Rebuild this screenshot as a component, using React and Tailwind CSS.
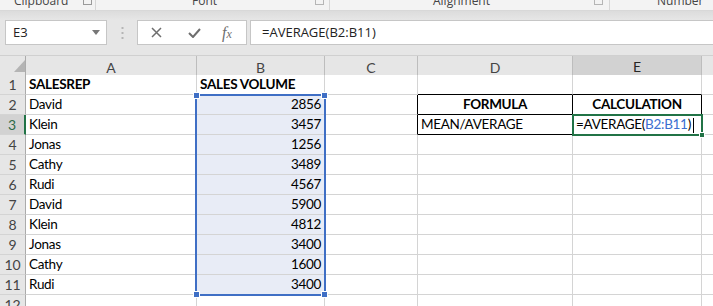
import React from 'react';

const cols = ['A', 'B', 'C', 'D', 'E'];
const data = [
    ['SALESREP', 'SALES VOLUME'],
    ['David', '2856'],
    ['Klein', '3457'],
    ['Jonas', '1256'],
    ['Cathy', '3489'],
    ['Rudi', '4567'],
    ['David', '5900'],
    ['Klein', '4812'],
    ['Jonas', '3400'],
    ['Cathy', '1600'],
    ['Rudi', '3400'],
    ['', ''],
];

const gridCols = 'grid grid-cols-[26px_171px_128px_93px_155px_129px_1fr]';

function Cell({ children, className = '' }) {
    return (
        <div className={`h-[20px] border-r border-b border-[#d4d4d4] px-[3px] leading-[19px] whitespace-nowrap overflow-visible ${className}`}>
            {children}
        </div>
    );
}

export default function App() {
    return (
        <div className="w-[713px] h-[306px] overflow-hidden bg-[#e6e6e6] text-[#000]" style={{ fontFamily: 'Lato, sans-serif' }}>
            {/* ribbon group labels, cut off at the top */}
            <div className="h-[10px] bg-[#f3f3f3] overflow-hidden flex text-[12px] text-[#444]" style={{ fontFamily: '"Open Sans", sans-serif' }}>
                <div className="w-[96px] flex border-r border-[#d6d6d6]">
                    <span className="ml-[14px] -mt-[7px] leading-[16px]">Clipboard</span>
                    <span className="ml-auto mr-[3px] -mt-[4px] w-[9px] h-[9px] border border-[#9a9a9a]"></span>
                </div>
                <div className="w-[234px] flex border-r border-[#d6d6d6]">
                    <span className="ml-[96px] -mt-[7px] leading-[16px]">Font</span>
                    <span className="ml-auto mr-[5px] -mt-[4px] w-[9px] h-[9px] border border-[#b5b5b5]"></span>
                </div>
                <div className="w-[280px] flex border-r border-[#d6d6d6]">
                    <span className="ml-[103px] -mt-[7px] leading-[16px]">Alignment</span>
                    <span className="ml-auto mr-[6px] -mt-[4px] w-[9px] h-[9px] border border-[#b5b5b5]"></span>
                </div>
                <div className="flex-1 flex">
                    <span className="ml-[47px] -mt-[7px] leading-[16px]">Number</span>
                </div>
            </div>
            <div className="h-[10px] border-t border-[#d8d8d8] bg-gradient-to-b from-[#dcdcdc] to-[#e6e6e6]"></div>

            {/* formula bar */}
            <div className="h-[25px] flex items-stretch" style={{ fontFamily: '"Open Sans", sans-serif' }}>
                <div className="ml-[5px] w-[102px] bg-white border border-[#c6c6c6] flex items-center pl-[7px] pr-[6px] text-[13px] text-[#222]">
                    <span>E3</span>
                    <svg className="ml-auto" width="8" height="5" viewBox="0 0 8 5"><path d="M0 0H8L4 5Z" fill="#777" /></svg>
                </div>
                <div className="w-[30px] flex items-center justify-center">
                    <svg width="3" height="12" viewBox="0 0 3 12">
                        <rect x="0.5" y="0" width="2" height="2" fill="#b5b5b5" />
                        <rect x="0.5" y="5" width="2" height="2" fill="#b5b5b5" />
                        <rect x="0.5" y="10" width="2" height="2" fill="#b5b5b5" />
                    </svg>
                </div>
                <div className="w-[110px] bg-white border border-[#c6c6c6] flex items-center">
                    <svg className="ml-[13px]" width="11" height="11" viewBox="0 0 11 11">
                        <path d="M1 1L10 10M10 1L1 10" stroke="#6e6e6e" strokeWidth="1.5" />
                    </svg>
                    <svg className="ml-[26px]" width="13" height="10" viewBox="0 0 13 10">
                        <path d="M1 5L5 9L12 1" stroke="#6e6e6e" strokeWidth="2" fill="none" />
                    </svg>
                    <span className="ml-[21px] text-[#6e6e6e] italic text-[16px] leading-none" style={{ fontFamily: '"Liberation Serif", serif' }}>
                        f<span className="text-[12px]">x</span>
                    </span>
                </div>
                <div className="ml-[3px] flex-1 bg-white border-t border-b border-l border-[#c6c6c6] flex items-center pl-[11px] text-[13px] text-[#222]">
                    =AVERAGE(B2:B11)
                </div>
            </div>

            <div className="h-[10px]"></div>

            {/* column headers */}
            <div className={`${gridCols} h-[20px] border-t border-[#d0d0d0] text-[14px] text-[#444]`}>
                <div className="border-r border-b border-[#ababab] relative">
                    <svg className="absolute left-[14px] top-[4px]" width="11" height="12" viewBox="0 0 11 12"><path d="M11 0V12H0Z" fill="#b4b4b4" /></svg>
                </div>
                {cols.map((c) => (
                    <div key={c} className={`border-r border-[#bdbdbd] flex items-center justify-center ${c === 'E' ? 'bg-[#d2d2d2] border-b-2 border-b-[#217346] text-[#262626]' : 'border-b border-b-[#ababab]'}`}>
                        {c}
                    </div>
                ))}
                <div className="border-b border-[#ababab]"></div>
            </div>

            {/* sheet body */}
            <div className="relative bg-white">
                {data.map((row, i) => {
                    const r = i + 1;
                    const inSel = r >= 2 && r <= 11;
                    return (
                        <div key={r} className={`${gridCols} text-[13.5px] tracking-[-0.3px]`}>
                            <div className={`h-[20px] border-b border-[#d4d4d4] flex items-center justify-center text-[14px] tracking-normal ${r === 3 ? 'bg-[#d2d2d2] text-[#2d6b49] border-r-2 border-r-[#217346]' : 'bg-[#e6e6e6] text-[#444] border-r border-r-[#ababab]'}`}>
                                {r}
                            </div>
                            <Cell className={r === 1 ? 'font-bold' : ''}>{row[0]}</Cell>
                            <Cell className={`${r === 1 ? 'font-bold' : 'text-right'} ${inSel ? 'bg-[#e8ecf6]' : ''}`}>{row[1]}</Cell>
                            <Cell className={r === 2 || r === 3 ? 'border-r-black' : ''}></Cell>
                            <Cell className={`${r === 1 ? 'border-b-black' : ''} ${r === 2 ? 'border-r-black border-b-black font-bold text-center' : ''} ${r === 3 ? 'border-r-black border-b-black' : ''}`}>
                                {r === 2 ? 'FORMULA' : r === 3 ? 'MEAN/AVERAGE' : ''}
                            </Cell>
                            <Cell className={`${r === 1 ? 'border-b-black' : ''} ${r === 2 ? 'border-r-black border-b-black font-bold text-center' : ''} ${r === 3 ? 'border-r-black border-b-black' : ''}`}>
                                {r === 3 ? (
                                    <span>=AVERAGE(<span className="text-[#3c6fd0]">B2:B11</span>)<span className="inline-block w-px h-[15px] bg-black align-middle ml-[2px]"></span></span>
                                ) : r === 2 ? 'CALCULATION' : ''}
                            </Cell>
                            <Cell className="border-r-0"></Cell>
                        </div>
                    );
                })}

                {/* selected range B2:B11 */}
                <div className="absolute left-[195px] top-[19px] w-[131px] h-[202px] border-2 border-[#3f6fc5] pointer-events-none">
                    <div className="absolute -left-[4px] -top-[4px] w-[5px] h-[5px] bg-[#3f6fc5] border border-white box-content"></div>
                    <div className="absolute -right-[4px] -top-[4px] w-[5px] h-[5px] bg-[#3f6fc5] border border-white box-content"></div>
                    <div className="absolute -left-[4px] -bottom-[4px] w-[5px] h-[5px] bg-[#3f6fc5] border border-white box-content"></div>
                    <div className="absolute -right-[4px] -bottom-[4px] w-[5px] h-[5px] bg-[#3f6fc5] border border-white box-content"></div>
                </div>

                {/* active cell E3 */}
                <div className="absolute left-[572px] top-[39px] w-[131px] h-[22px] border-2 border-[#217346] pointer-events-none">
                    <div className="absolute -right-[4px] -bottom-[4px] w-[4px] h-[4px] bg-[#217346] border border-white box-content"></div>
                </div>
            </div>
        </div>
    );
}
